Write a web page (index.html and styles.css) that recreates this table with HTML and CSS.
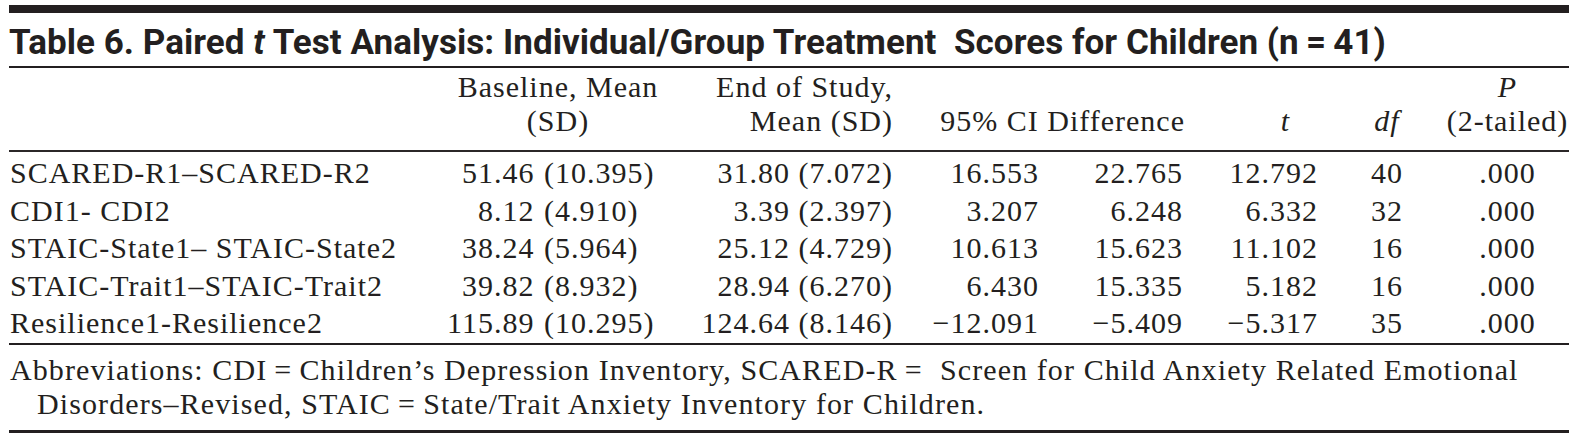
FILE: index.html
```html
<!DOCTYPE html>
<html lang="en">
<head>
<meta charset="utf-8">
<title>Table 6</title>
<link rel="stylesheet" href="styles.css">
</head>
<body>
<div class="page">
  <div class="topbar"></div>
  <h1 class="title">Table 6. Paired <i>t</i> Test Analysis: Individual/Group Treatment&nbsp; Scores for Children (n&thinsp;=&thinsp;41)</h1>
  <table class="data">
    <colgroup>
      <col class="c-label">
      <col class="c-base">
      <col class="c-end">
      <col class="c-lo">
      <col class="c-hi">
      <col class="c-t">
      <col class="c-df">
      <col class="c-p">
    </colgroup>
    <thead>
      <tr>
        <th class="h-label"></th>
        <th class="h-base">Baseline, Mean<br>(SD)</th>
        <th class="h-end">End of Study,<br>Mean (SD)</th>
        <th class="h-ci" colspan="2">95% CI Difference</th>
        <th class="h-t"><i>t</i></th>
        <th class="h-df"><i>df</i></th>
        <th class="h-p"><i>P</i><br>(2-tailed)</th>
      </tr>
    </thead>
    <tbody>
      <tr>
        <td class="label">SCARED-R1–SCARED-R2</td>
        <td class="pair">51.46 <span class="sd">(10.395)</span></td>
        <td class="num">31.80 (7.072)</td>
        <td class="num">16.553</td>
        <td class="num">22.765</td>
        <td class="num">12.792</td>
        <td class="ctr">40</td>
        <td class="ctr">.000</td>
      </tr>
      <tr>
        <td class="label">CDI1- CDI2</td>
        <td class="pair">8.12 <span class="sd">(4.910)</span></td>
        <td class="num">3.39 (2.397)</td>
        <td class="num">3.207</td>
        <td class="num">6.248</td>
        <td class="num">6.332</td>
        <td class="ctr">32</td>
        <td class="ctr">.000</td>
      </tr>
      <tr>
        <td class="label">STAIC-State1– STAIC-State2</td>
        <td class="pair">38.24 <span class="sd">(5.964)</span></td>
        <td class="num">25.12 (4.729)</td>
        <td class="num">10.613</td>
        <td class="num">15.623</td>
        <td class="num">11.102</td>
        <td class="ctr">16</td>
        <td class="ctr">.000</td>
      </tr>
      <tr>
        <td class="label">STAIC-Trait1–STAIC-Trait2</td>
        <td class="pair">39.82 <span class="sd">(8.932)</span></td>
        <td class="num">28.94 (6.270)</td>
        <td class="num">6.430</td>
        <td class="num">15.335</td>
        <td class="num">5.182</td>
        <td class="ctr">16</td>
        <td class="ctr">.000</td>
      </tr>
      <tr class="last">
        <td class="label">Resilience1-Resilience2</td>
        <td class="pair">115.89 <span class="sd">(10.295)</span></td>
        <td class="num">124.64 (8.146)</td>
        <td class="num">−12.091</td>
        <td class="num">−5.409</td>
        <td class="num">−5.317</td>
        <td class="ctr">35</td>
        <td class="ctr">.000</td>
      </tr>
    </tbody>
  </table>
  <p class="note">Abbreviations: CDI&thinsp;=&thinsp;Children’s Depression Inventory, SCARED-R&thinsp;=&nbsp; Screen for Child Anxiety Related Emotional<br>Disorders–Revised, STAIC&thinsp;=&thinsp;State/Trait Anxiety Inventory for Children.</p>
</div>
</body>
</html>
```
FILE: styles.css
```css
html, body {
  margin: 0;
  padding: 0;
  background: #ffffff;
}

body {
  color: #231f20;
  font-family: "Liberation Serif", "Times New Roman", serif;
}

.page {
  width: 1560px;
  margin: 0 0 0 9px;
  padding-top: 5px;
}

.topbar {
  height: 8px;
  background: #231f20;
}

.title {
  margin: 0;
  padding: 10px 0 3px 0;
  font-family: Roboto, "Open Sans", sans-serif;
  font-weight: 700;
  font-size: 35px;
  line-height: 40px;
  letter-spacing: 0.05px;
  white-space: nowrap;
  border-bottom: 2px solid #231f20;
}

.title i {
  font-style: italic;
}

.data {
  width: 1560px;
  table-layout: fixed;
  border-collapse: collapse;
  font-size: 30px;
  letter-spacing: 1px;
  line-height: 37.5px;
}

.c-label { width: 435px; }
.c-base  { width: 220px; }
.c-end   { width: 239px; }
.c-lo    { width: 146px; }
.c-hi    { width: 144px; }
.c-t     { width: 135px; }
.c-df    { width: 118px; }
.c-p     { width: 123px; }

.data th {
  font-weight: 400;
  line-height: 34px;
  padding: 2px 0 12px 0;
  vertical-align: bottom;
  white-space: nowrap;
}

.data thead tr {
  border-bottom: 2.5px solid #2b2728;
}

.h-base {
  text-align: center;
  padding-left: 8px !important;
}

.h-end {
  text-align: right;
  padding-right: 10px !important;
}

.h-ci {
  text-align: right;
  padding-right: 8px !important;
}

.h-t {
  text-align: right;
  padding-right: 38px !important;
}

.h-df,
.h-p {
  text-align: center;
}

.data td {
  padding: 0;
  white-space: nowrap;
}

.data tbody tr:first-child td {
  padding-top: 2px;
}

.data tbody tr.last td {
  padding-bottom: 1.5px;
}

.data tbody tr.last {
  border-bottom: 2px solid #231f20;
}

.label {
  text-align: left;
  padding-left: 1px !important;
}

.num {
  text-align: right;
  padding-right: 10px !important;
}

.pair {
  text-align: right;
  word-spacing: 1px;
  padding-right: 9px !important;
}

.sd {
  display: inline-block;
  width: 111px;
  text-align: left;
  word-spacing: 0;
}

.ctr {
  text-align: center;
}

.note {
  margin: 0;
  padding: 8px 0 9px 28px;
  text-indent: -27px;
  font-size: 30px;
  line-height: 34px;
  letter-spacing: 1.1px;
  white-space: nowrap;
  border-bottom: 3px solid #231f20;
}
```
